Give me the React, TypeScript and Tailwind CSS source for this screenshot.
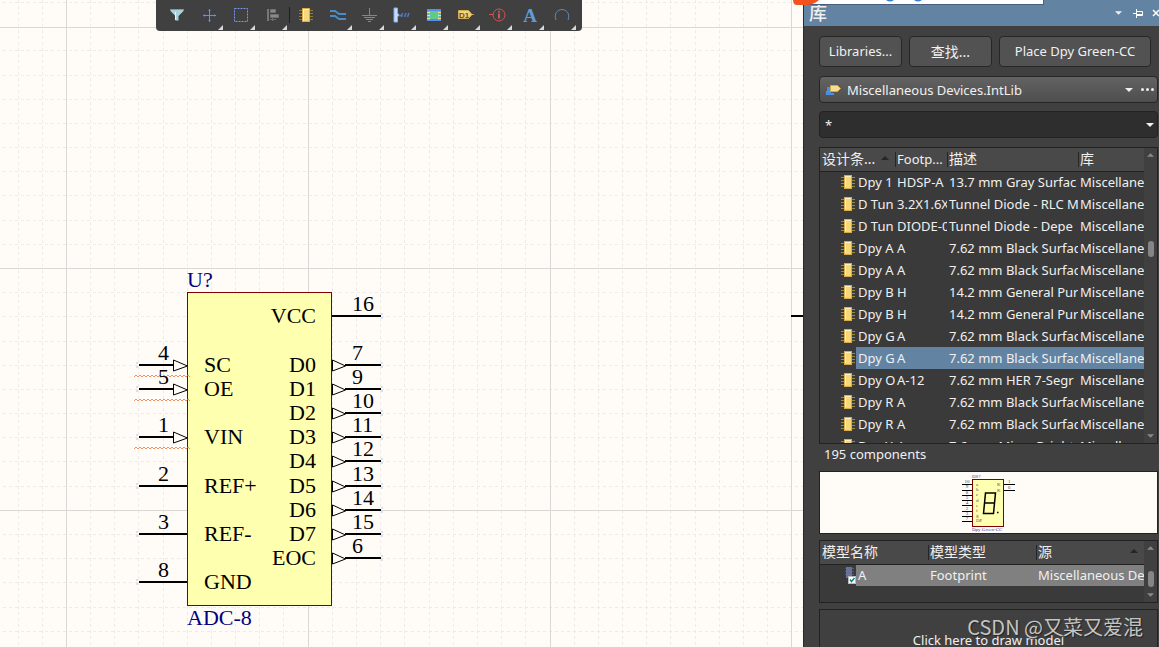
import React, { useState } from 'react';

const GRID = 24.18;
const gridSteps = Array.from({ length: 120 }, (_, i) => i);

interface Pin {
    num: string;
    name: string;
    y: number;
    arrow?: boolean;
    warn?: boolean;
}

const leftPins: Pin[] = [
    { num: '4', name: 'SC', y: 365, arrow: true, warn: true },
    { num: '5', name: 'OE', y: 389, arrow: true, warn: true },
    { num: '1', name: 'VIN', y: 437, arrow: true, warn: true },
    { num: '2', name: 'REF+', y: 486 },
    { num: '3', name: 'REF-', y: 534 },
    { num: '8', name: 'GND', y: 582 },
];

const rightPins: Pin[] = [
    { num: '16', name: 'VCC', y: 316 },
    { num: '7', name: 'D0', y: 365, arrow: true },
    { num: '9', name: 'D1', y: 389, arrow: true },
    { num: '10', name: 'D2', y: 413, arrow: true },
    { num: '11', name: 'D3', y: 437, arrow: true },
    { num: '12', name: 'D4', y: 461, arrow: true },
    { num: '13', name: 'D5', y: 486, arrow: true },
    { num: '14', name: 'D6', y: 510, arrow: true },
    { num: '15', name: 'D7', y: 534, arrow: true },
    { num: '6', name: 'EOC', y: 558, arrow: true },
];

const components = [
    ['Dpy 1', 'HDSP-A', '13.7 mm Gray Surfac', 'Miscellane'],
    ['D Tun', '3.2X1.6X', 'Tunnel Diode - RLC M', 'Miscellane'],
    ['D Tun', 'DIODE-0', 'Tunnel Diode - Depe', 'Miscellane'],
    ['Dpy A', 'A', '7.62 mm Black Surfac', 'Miscellane'],
    ['Dpy A', 'A', '7.62 mm Black Surfac', 'Miscellane'],
    ['Dpy B', 'H', '14.2 mm General Pur', 'Miscellane'],
    ['Dpy B', 'H', '14.2 mm General Pur', 'Miscellane'],
    ['Dpy G', 'A', '7.62 mm Black Surfac', 'Miscellane'],
    ['Dpy G', 'A', '7.62 mm Black Surfac', 'Miscellane'],
    ['Dpy O', 'A-12', '7.62 mm HER 7-Segr', 'Miscellane'],
    ['Dpy R', 'A', '7.62 mm Black Surfac', 'Miscellane'],
    ['Dpy R', 'A', '7.62 mm Black Surfac', 'Miscellane'],
    ['Dpy Y', 'A', '7.6 mm Micro Bright', 'Miscellane'],
];

const ChipIcon = () => (
    <svg width="14" height="16" viewBox="0 0 14 16" className="block">
        <path d="M0 3.5h14M0 6.5h14M0 9.5h14M0 12.5h14" stroke="#a08a3a" />
        <rect x="3.5" y="1.5" width="7" height="13" fill="#f7d878" stroke="#d9ab4c" />
        <path d="M4 2.5h6M4.5 2v11" stroke="#fdf0c4" />
    </svg>
);

const tools: { label: string; menu: boolean; icon: React.ReactNode }[] = [
    {
        label: 'Filter', menu: false, icon: <>
            <path d="M3.5 4h13v2l-5 5v4.5h-3V11l-5-5z" fill="#a9d3dc" />
            <path d="M3.5 4.5h13" stroke="#6b9fb5" />
            <path d="M8.5 7v8" stroke="#e2f5f7" />
        </>,
    },
    {
        label: 'Move', menu: true, icon: <>
            <path d="M10.5 4v13M4 10.5h13" stroke="#6b8fe0" />
            <path d="M9.5 5.5h2M9.5 15.5h2M5.5 9.5v2M15.5 9.5v2" stroke="#6b8fe0" />
        </>,
    },
    { label: 'Select', menu: true, icon: <rect x="3.5" y="3.5" width="13" height="13" fill="none" stroke="#7597ee" strokeDasharray="2 1" /> },
    {
        label: 'Align', menu: true, icon: <>
            <path d="M5 4v12" stroke="#777" strokeWidth="2" />
            <path d="M7.5 4.5h5v3h-5zM7.5 9.5h8v3h-8z" fill="#8a8a8a" stroke="#707070" />
            <path d="M7 14.5h6M9.5 13v3" stroke="#707070" />
        </>,
    },
    {
        label: 'Place part', menu: false, icon: <>
            <path d="M3 5.5h14M3 8.5h14M3 11.5h14M3 14.5h14" stroke="#8f7c30" />
            <rect x="6.5" y="3.5" width="7" height="13" fill="#f7d878" stroke="#d9ab4c" />
            <path d="M7 4.5h6M7.5 4v12" stroke="#fdf0c4" />
        </>,
    },
    { label: 'Wire', menu: true, icon: <path d="M2 6h5l4 3h7M2 11h5l4 3h7" fill="none" stroke="#4a8bc8" strokeWidth="2" /> },
    { label: 'Power port', menu: true, icon: <path d="M9.5 3v7M2 10.5h15M4 12.5h11M6 14.5h7M8 16.5h3" stroke="#e0605a" fill="none" /> },
    {
        label: 'Harness', menu: true, icon: <>
            <path d="M2 3h3.5v5L7 10l-1.5 2v5H2z" fill="#c6defa" stroke="#82aeea" />
            <path d="M7 10.5h3M9.5 12l1-4M12.500 12l1.500-4M15.500 12l1.500-4" stroke="#5078d0" strokeWidth="1.5" />
        </>,
    },
    {
        label: 'Sheet symbol', menu: true, icon: <>
            <rect x="4" y="5" width="12" height="10" fill="#62c890" stroke="#5290ea" strokeWidth="2" />
            <path d="M3 7.5h3M3 10.5h3M3 13.5h3M14 7.5h3M14 10.5h3M14 13.5h3" stroke="#f5df7c" strokeWidth="1.5" />
        </>,
    },
    {
        label: 'Port', menu: true, icon: <>
            <path d="M14 9.5h4" stroke="#c69b3c" />
            <path d="M2.500 5.500h10l3.500 4-3.500 4h-10z" fill="#f0d284" stroke="#d3aa50" />
            <text x="3" y="12.500" fontSize="8" fontWeight="bold" fill="#6b4d10" fontFamily="Liberation Sans, sans-serif">D1</text>
        </>,
    },
    {
        label: 'Directive', menu: true, icon: <>
            <circle cx="11" cy="10" r="6" fill="none" stroke="#dd5050" />
            <path d="M1 9.5h4" stroke="#dd5050" />
            <path d="M11 8.5v5M11 6v1.500" stroke="#e86a60" strokeWidth="1.5" />
        </>,
    },
    {
        label: 'Text string', menu: true,
        icon: <text x="10" y="17" textAnchor="middle" fontSize="19" fontWeight="bold" fill="#5d9ce0" fontFamily="Liberation Serif, serif">A</text>,
    },
    { label: 'Arc', menu: true, icon: <path d="M4 15C1.500 9 5.500 4.500 10 4.500s8.500 4.500 6 10.500" fill="none" stroke="#5a8cc0" /> },
];

const Toolbar = () => (
    <div className="absolute top-0 left-[156px] h-[31px] flex pl-[5px] pr-1 rounded-b bg-[#404040]">
        {tools.map((tool, i) => (
            <React.Fragment key={tool.label}>
                {i === 4 && <span className="w-px h-4 mt-[7px] bg-[#1e1e1e]" />}
                <button aria-label={tool.label} className="relative w-8 h-full flex justify-center pt-[5px]">
                    <svg width="20" height="20" viewBox="0 0 20 20">{tool.icon}</svg>
                    {tool.menu && (
                        <svg width="5" height="5" className="absolute right-0.5 bottom-px">
                            <path d="M5 0v5H0z" fill="#d8d8d8" />
                        </svg>
                    )}
                </button>
            </React.Fragment>
        ))}
    </div>
);

const squiggle = (y: number) => `M134 ${y}` + 'l2 -2l2 2'.repeat(14);

const Schematic = () => (
    <svg className="block w-full h-full" fontFamily="Liberation Serif, serif" fontSize="22">
        {/* minor grid, then the major lines on every tenth step */}
        <g stroke="#ecebe8" strokeDasharray="3 3" shapeRendering="crispEdges">
            {gridSteps.map(i => {
                const x = Math.floor(18 + i * GRID) + 0.5;
                const y = Math.floor(2.5 + i * GRID) + 0.5;
                return (
                    <React.Fragment key={i}>
                        {i % 10 !== 2 && <path d={`M${x} 0V3000`} />}
                        {i % 10 !== 1 && <path d={`M3 ${y}H3000`} />}
                    </React.Fragment>
                );
            })}
        </g>
        <g stroke="#d8d8d6" shapeRendering="crispEdges">
            {gridSteps.filter(i => i % 10 === 0).map(i => (
                <React.Fragment key={i}>
                    <path d={`M${Math.floor(66.4 + i * GRID) + 0.5} 0V3000`} />
                    <path d={`M0 ${Math.floor(27 + i * GRID) + 0.5}H3000`} />
                </React.Fragment>
            ))}
        </g>

        <rect x="187.5" y="292.5" width="144" height="313" fill="#ffffb0" stroke="#800000" />
        <text x="187" y="287" fill="#000080">U?</text>
        <text x="187" y="625" fill="#000080">ADC-8</text>

        {leftPins.map(pin => (
            <g key={pin.num}>
                <path d={pin.arrow ? `M139 ${pin.y}H173` : `M139 ${pin.y}H187`} stroke="#000" strokeWidth="2" />
                {pin.arrow && <path d={`M173.5 ${pin.y - 5}v11l14 -5z`} fill="#fffcf8" stroke="#000" />}
                {pin.warn && <path d={squiggle(pin.y + 12)} fill="none" stroke="#f0763c" strokeWidth="0.8" />}
                <path d={`M136 ${pin.y - 2}h2M136 ${pin.y + 2}h2`} stroke="#d5e0f2" strokeWidth="2" />
                <text x="158" y={pin.y - 5}>{pin.num}</text>
                <text x="204" y={pin.y + 7}>{pin.name}</text>
            </g>
        ))}
        {rightPins.map(pin => (
            <g key={pin.num}>
                <path d={pin.arrow ? `M345 ${pin.y}H381` : `M332 ${pin.y}H381`} stroke="#000" strokeWidth="2" />
                {pin.arrow && <path d={`M332.5 ${pin.y - 5}v11l13 -5z`} fill="#fffcf8" stroke="#000" />}
                <path d={`M381 ${pin.y - 2}h2M381 ${pin.y + 2}h2`} stroke="#d5e0f2" strokeWidth="2" />
                <text x="352" y={pin.y - 5}>{pin.num}</text>
                <text x="316" y={pin.y + 7} textAnchor="end">{pin.name}</text>
            </g>
        ))}
        <path d="M791 316h12" stroke="#000" strokeWidth="2" />
    </svg>
);

const Preview = () => (
    <svg width="54" height="60" viewBox="963 474 54 60" fontFamily="Liberation Serif, serif" fontSize="5">
        <rect x="973.5" y="480.5" width="31" height="47" fill="#ffffb0" stroke="#800000" />
        <path d="M963 485.5h10M963 491.5h10M963 496.5h10M963 501.5h10M963 506.5h10M963 512.5h10M963 517.5h10M963 522.5h10M1005 485.5h11M1005 491.5h11" stroke="#000" />
        {['10', '9', '8', '5', '4', '2', '3', '7'].map((n, i) => (
            <text key={n} x="968" y={484 + Math.round(i * 5.3)} textAnchor="middle" fill="#444">{n}</text>
        ))}
        {['a', 'b', 'c', 'd', 'e', 'f', 'g', 'DP'].map((n, i) => (
            <text key={n} x="977" y={487 + Math.round(i * 5.2)} fill="#555">{n}</text>
        ))}
        <text x="998" y="487" fill="#555">K</text>
        <text x="998" y="493" fill="#555">K</text>
        <text x="1009" y="484" fill="#444">1</text>
        <text x="1009" y="490" fill="#444">6</text>
        <path d="M986.5 494h10l-2 20.5h-10zM985.5 504h10" fill="none" stroke="#000" strokeWidth="1.5" />
        <path d="M998 513.5h1.500" stroke="#000" strokeWidth="1.5" />
        <text x="973" y="479" fill="#4040a0">DS?</text>
        <text x="973" y="532" fill="#4040a0">Dpy Green-CC</text>
    </svg>
);

const Triangle: React.FC<{ className: string; up?: boolean }> = ({ className, up }) => (
    <svg width="8" height="4" viewBox="0 0 8 4" className={className}>
        <path d={up ? 'M0 4h8L4 0z' : 'M0 0h8L4 4z'} fill="currentColor" />
    </svg>
);

const Scrollbar: React.FC<{ thumb: string }> = ({ thumb }) => (
    <div className="w-[13px] shrink-0 relative bg-[#404040] flex flex-col items-center justify-between py-[5px] text-[#8a8a8a]">
        <Triangle up className="w-[7px]" />
        <span className={`absolute w-1.5 h-4 rounded-full bg-[#858585] ${thumb}`} />
        <Triangle className="w-[7px]" />
    </div>
);

const th = 'relative h-[23px] p-0 pl-0.5 text-left font-normal text-sm leading-5 truncate';
const divider = 'before:absolute before:left-0 before:top-1 before:bottom-1 before:w-px before:bg-[#262626]';
const td = 'h-[22px] p-0 pl-0.5 leading-5 overflow-hidden whitespace-nowrap';
const button = 'h-[31px] rounded-sm border border-[#262626] bg-[#525252] text-center whitespace-nowrap';

const LibraryPanel = () => {
    const [selected, setSelected] = useState(8);
    const [filter, setFilter] = useState('*');

    return (
        <aside className="w-[356px] shrink-0 flex flex-col border-l border-[#2a2a2a] bg-[#404040] overflow-hidden">
            <header className="relative h-[26px] shrink-0 flex items-center bg-[#6383a3] pl-[5px]">
                <h2 className="flex-1 text-lg leading-6 font-medium">库</h2>
                <button aria-label="Panel menu" className="w-5"><Triangle className="w-[7px] mx-auto" /></button>
                <button aria-label="Pin panel" className="w-5">
                    <svg width="10" height="9" viewBox="0 0 10 9" className="mx-auto">
                        <path d="M0 4.5h3M3.5 0v9M4 2.5h5.500v4H4M4 5.5h5" stroke="#fff" fill="none" />
                    </svg>
                </button>
                <button aria-label="Close panel" className="w-[15px] -mr-1">
                    <svg width="8" height="8" viewBox="0 0 8 8" className="mx-auto">
                        <path d="M1 1l6 6M7 1L1 7" stroke="#fff" strokeWidth="1.5" />
                    </svg>
                </button>
                <div className="absolute left-0 top-0 w-[240px] h-[5px] bg-white border-b border-r border-[#4a5f80]">
                    <svg width="40" height="3" className="absolute left-[82px] top-0">
                        <path d="M0 0q4 3 8 0M28 0q4 3 8 0" fill="#3a80cc" />
                    </svg>
                </div>
            </header>

            <div className="flex-1 flex flex-col pl-[15px] pr-px">
                <div className="flex gap-[7px] mt-2.5 pr-[7px]">
                    <button className={`${button} w-[83px]`}>Libraries...</button>
                    <button className={`${button} w-[83px] text-sm`}>查找...</button>
                    <button className={`${button} flex-1`}>Place Dpy Green-CC</button>
                </div>

                <div className="mt-[9px] h-[27px] flex items-center rounded-sm border border-[#262626] bg-linear-to-b from-[#636363] to-[#4e4e4e]">
                    <svg width="16" height="12" viewBox="0 0 16 12" className="ml-1.5 shrink-0">
                        <path d="M5 4H2v2h3M5 8H1v2h7" fill="none" stroke="#4a90e0" strokeWidth="2" />
                        <path d="M4.5 1.5h7l3 3-3 3h-7z" fill="#f5dd92" stroke="#d5a848" />
                    </svg>
                    <div className="relative flex-1 flex items-center">
                        <select aria-label="Library" className="w-full h-6 appearance-none bg-transparent pl-[5px] leading-5">
                            <option>Miscellaneous Devices.IntLib</option>
                        </select>
                        <Triangle className="absolute right-0.5 pointer-events-none" />
                    </div>
                    <button aria-label="More" className="w-[22px] flex justify-end pr-[3px]">
                        <svg width="13" height="3">
                            <circle cx="1.500" cy="1.500" r="1.500" fill="#eee" />
                            <circle cx="6.500" cy="1.500" r="1.500" fill="#eee" />
                            <circle cx="11.500" cy="1.500" r="1.500" fill="#eee" />
                        </svg>
                    </button>
                </div>

                <div className="relative mt-2 h-[27px] flex items-center rounded-sm border border-[#222] bg-[#2e2e2e]">
                    <input
                        aria-label="Filter"
                        value={filter}
                        onChange={e => setFilter(e.target.value)}
                        className="w-full h-6 bg-transparent pl-[5px] pr-5 outline-none"
                    />
                    <Triangle className="absolute right-[3px] pointer-events-none" />
                </div>

                <div className="mt-[9px] h-[297px] shrink-0 flex border border-[#222] bg-[#3a3a3a]">
                    <div className="flex-1 overflow-hidden">
                        <table className="w-full table-fixed border-collapse">
                            <colgroup>
                                <col className="w-9" />
                                <col className="w-[39px]" />
                                <col className="w-[52px]" />
                                <col className="w-[131px]" />
                                <col />
                            </colgroup>
                            <thead className="bg-[#494949]">
                                <tr className="border-b border-[#222]">
                                    <th colSpan={2} className={th}>
                                        设计条...
                                        <Triangle up className="absolute right-1.5 top-2 text-[#262626]" />
                                    </th>
                                    <th className={`${th} ${divider} text-[13px]`}>Footp...</th>
                                    <th className={`${th} ${divider}`}>描述</th>
                                    <th className={`${th} ${divider}`}>库</th>
                                </tr>
                            </thead>
                            <tbody>
                                {components.map((row, i) => (
                                    <tr key={i} onClick={() => setSelected(i)}>
                                        <td className="p-0 pl-[21px]"><ChipIcon /></td>
                                        {row.map((cell, c) => (
                                            <td key={c} className={i === selected ? `${td} bg-[#6383a3]` : td}>{cell}</td>
                                        ))}
                                    </tr>
                                ))}
                            </tbody>
                        </table>
                    </div>
                    <Scrollbar thumb="top-[93px]" />
                </div>

                <p className="h-[27px] shrink-0 pl-[5px] leading-5">195 components</p>

                <div className="h-[63px] shrink-0 flex justify-center items-center border border-[#222] bg-[#fffcf8]">
                    <Preview />
                </div>

                <div className="mt-1.5 h-[63px] shrink-0 flex border border-[#222] bg-[#3a3a3a]">
                    <div className="flex-1 overflow-hidden">
                        <table className="w-full table-fixed border-collapse">
                            <colgroup>
                                <col className="w-9" />
                                <col className="w-[72px]" />
                                <col className="w-[108px]" />
                                <col />
                            </colgroup>
                            <thead className="bg-[#494949]">
                                <tr className="border-b border-[#222]">
                                    <th colSpan={2} className={th}>模型名称</th>
                                    <th className={`${th} ${divider}`}>模型类型</th>
                                    <th className={`${th} ${divider}`}>
                                        源
                                        <Triangle up className="absolute right-1.5 top-2 text-[#262626]" />
                                    </th>
                                </tr>
                            </thead>
                            <tbody>
                                <tr>
                                    <td className="p-0 pl-[25px]">
                                        <svg width="11" height="18" viewBox="0 0 11 18" className="block">
                                            <path d="M0 2.5h9M0 5.5h9M0 8.5h9" stroke="#55597a" />
                                            <rect x="1" y="1" width="6" height="11" fill="#6a7198" />
                                            <rect x="3.5" y="10.5" width="7" height="7" fill="#fff" stroke="#bbb" />
                                            <path d="M5 13.5l1.500 2 3-3.500" fill="none" stroke="#188" strokeWidth="1.5" />
                                        </svg>
                                    </td>
                                    <td className={`${td} bg-[#808080]`}>A</td>
                                    <td className={`${td} bg-[#808080]`}>Footprint</td>
                                    <td className={`${td} bg-[#808080]`}>Miscellaneous De</td>
                                </tr>
                            </tbody>
                        </table>
                    </div>
                    <Scrollbar thumb="top-[30px]" />
                </div>

                <div className="mt-1.5 h-[63px] shrink-0 flex items-center justify-center border border-[#222]">
                    Click here to draw model
                </div>
            </div>
        </aside>
    );
};

const App: React.FC = () => {
    return (
        <div className="relative h-screen flex overflow-hidden bg-[#fffcf8] text-[13px] text-[#f0f0f0] font-['Noto_Sans','Noto_Sans_CJK_SC',sans-serif]">
            <main className="relative flex-1 min-w-0 overflow-hidden">
                <Schematic />
                <Toolbar />
            </main>
            <LibraryPanel />
            <svg width="26" height="5" className="absolute top-0 right-[340px]">
                <path d="M0 0h26q-5 5-14 5H4Q0 5 0 0z" fill="#f4511e" />
            </svg>
            <p className="absolute right-4 bottom-1.5 text-xl leading-7 text-[#c4c4c4] [text-shadow:1px_1px_1px_#222] font-['Noto_Sans_CJK_SC',sans-serif]">
                CSDN @又菜又爱混
            </p>
        </div>
    );
};

export default App;
